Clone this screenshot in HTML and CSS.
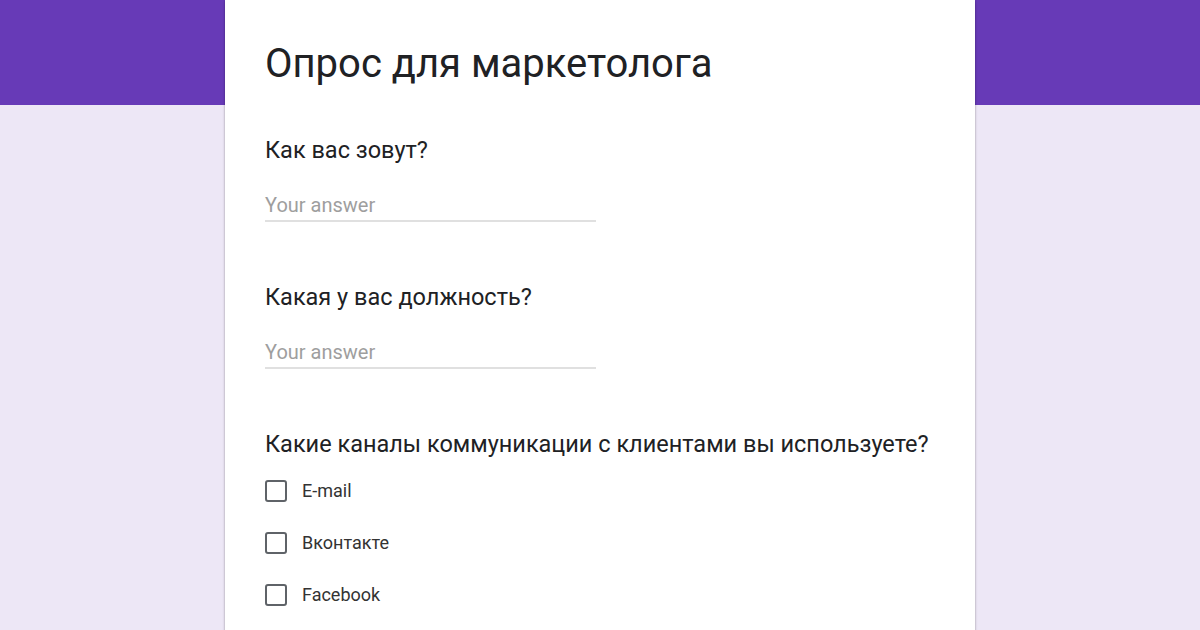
FILE: index.html
```html
<!DOCTYPE html>
<html lang="ru">
<head>
    <meta charset="UTF-8">
    <title>Опрос для маркетолога</title>
    <link rel="stylesheet" href="styles.css">
</head>
<body>
    <!-- purple band on top -->
    <div class="top_band"></div>
    <div class="form_card">
        <h1 class="form_title">Опрос для маркетолога</h1>

        <div class="question">
            <p class="q_title">Как вас зовут?</p>
            <div class="answer">Your answer</div>
        </div>

        <div class="question">
            <p class="q_title">Какая у вас должность?</p>
            <div class="answer">Your answer</div>
        </div>

        <div class="question">
            <p class="q_title">Какие каналы коммуникации с клиентами вы используете?</p>
            <div class="options">
                <label class="option"><span class="box"></span>E-mail</label>
                <label class="option"><span class="box"></span>Вконтакте</label>
                <label class="option"><span class="box"></span>Facebook</label>
            </div>
        </div>
    </div>
</body>
</html>
```

FILE: styles.css
```css
*{
    margin: 0;
    padding: 0;
    box-sizing: border-box;
}
body{
    background-color: #ede7f6;
    font-family: Roboto, "Noto Sans", sans-serif;
    color: #202124;
    height: 630px;
    overflow: hidden;
}
.top_band{
    background-color: #673ab7;
    height: 105px;
}
.form_card{
    background-color: #fff;
    width: 750px;
    height: 660px;
    margin: -105px auto 0;
    padding: 40px 40px 0;
    box-shadow: 0 0 2px rgba(0,0,0,0.25), 0 2px 3px rgba(0,0,0,0.15);
}
.form_title{
    font-size: 40px;
    font-weight: 400;
    line-height: 48px;
    margin-bottom: 48px;
}
.question{
    margin-bottom: 61px;
}
.q_title{
    font-size: 23.5px;
    line-height: 28px;
}
.answer{
    width: 331px;
    margin-top: 29px;
    padding-bottom: 3px;
    border-bottom: 2px solid #e0e0e0;
    font-size: 20px;
    line-height: 24px;
    color: #9e9e9e;
}
.options{
    margin-top: 22px;
    display: flex;
    flex-direction: column;
    gap: 30px;
}
.option{
    display: flex;
    align-items: center;
    gap: 15px;
    font-size: 18px;
    line-height: 22px;
    color: #333;
}
.box{
    width: 22px;
    height: 22px;
    border: 2px solid #5f6368;
    border-radius: 3px;
}
```
